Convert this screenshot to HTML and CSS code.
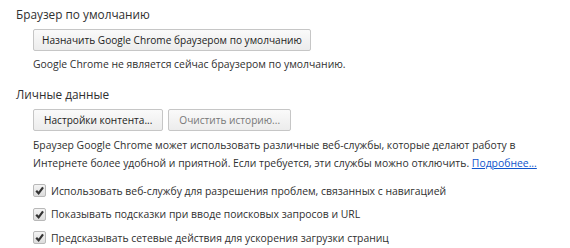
FILE: index.html
```html
<!DOCTYPE html>
<html lang="ru">
<head>
<meta charset="UTF-8">
<title>Настройки</title>
<link rel="stylesheet" href="styles.css">
</head>
<body>
<section class="sec">
  <h3>Браузер по умолчанию</h3>
  <div class="body">
    <div class="btns"><button>Назначить Google Chrome браузером по умолчанию</button></div>
    <div class="note">Google Chrome не является сейчас браузером по умолчанию.</div>
  </div>
</section>

<section class="sec">
  <h3>Личные данные</h3>
  <div class="body">
    <div class="btns">
      <button class="wide">Настройки контента...</button>
      <button class="wide off">Очистить историю...</button>
    </div>
    <p class="txt">Браузер Google Chrome может использовать различные веб-службы, которые делают работу в<br>
      Интернете более удобной и приятной. Если требуется, эти службы можно отключить. <a href="#">Подробнее...</a></p>
    <label class="chk"><span class="box"><svg viewBox="0 0 10 10"><path d="M2 5.2 4.2 7.6 8.2 2.2" /></svg></span>Использовать веб-службу для разрешения проблем, связанных с навигацией</label>
    <label class="chk"><span class="box"><svg viewBox="0 0 10 10"><path d="M2 5.2 4.2 7.6 8.2 2.2" /></svg></span>Показывать подсказки при вводе поисковых запросов и URL</label>
    <label class="chk"><span class="box"><svg viewBox="0 0 10 10"><path d="M2 5.2 4.2 7.6 8.2 2.2" /></svg></span>Предсказывать сетевые действия для ускорения загрузки страниц</label>
  </div>
</section>
</body>
</html>
```

FILE: styles.css
```css
/* настройки: секции, кнопки, флажки */
body{margin:0;padding:6px 0 0 16px;font-family:"Open Sans",Arial,sans-serif;font-size:10.4px;color:#303030;background:#fff;}
.sec{margin-bottom:14px;}
.sec h3{margin:0 0 7px;font-size:11.8px;font-weight:normal;color:#303030;line-height:16px;}
.body{padding-left:17px;}
.btns{display:flex;gap:5px;margin-bottom:5px;}
button{font:inherit;font-size:10.1px;color:#222;height:22px;padding:0 8px;border:1px solid #c6c6c6;border-radius:2px;
       background:linear-gradient(#fafafa,#ececec);}
button.wide{padding:0 10px;}
button.off{color:#777;}
.note{line-height:16px;}
.txt{margin:5px 0 7px;line-height:18px;white-space:nowrap;}
.txt a{color:#15c;}
.chk{display:flex;align-items:center;gap:5px;height:23.5px;}
.box{width:11px;height:11px;border:1px solid #b8b8b8;border-radius:2px;background:linear-gradient(#f4f4f4,#dcdcdc);display:flex;}
.box svg{width:11px;height:11px;}
.box path{fill:none;stroke:#333;stroke-width:2;}
```
